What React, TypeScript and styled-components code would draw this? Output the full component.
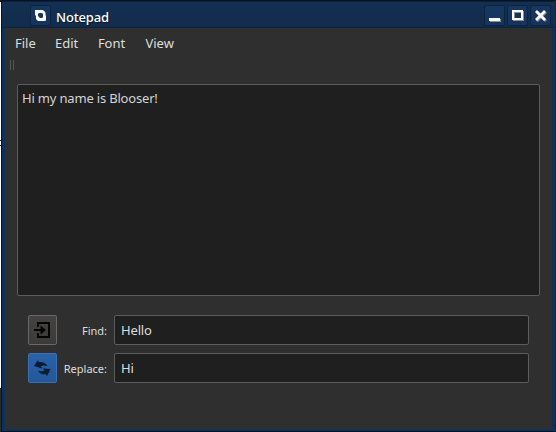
import React from "react";
import styled, { createGlobalStyle } from "styled-components";

const GlobalStyle = createGlobalStyle`
  * { box-sizing: border-box; }
  body { margin: 0; overflow: hidden; background: #101820; font-family: "Noto Sans", sans-serif; }
`;

const Desktop = styled.div`
  width: 556px;
  height: 432px;
  padding-left: 1px;
  background: linear-gradient(#0b1a2b 0 2px, #ffffff 2px 140px, #3c0a50 140px 141px, #ffffff 141px 145px, #3c0a50 145px 146px, #ffffff 146px 388px, #2a2c30 388px);
`;

const Window = styled.div`
  display: flex;
  flex-direction: column;
  width: 555px;
  height: 432px;
  padding: 0 3px 2px;
  border: 1px solid #061422;
  border-right-color: #0d2745;
  background: #0f3159;
`;

const TitleBar = styled.div`
  display: flex;
  align-items: center;
  flex: 0 0 27px;
  margin: 0 -3px;
  padding: 2px 4px 0 28px;
  background: linear-gradient(#0b2038 0 1px, #132f52 1px, #112c4c 25px, #0b213b);
`;

const TitleButton = styled.button<{ $gap?: number }>`
  width: 21px;
  height: 21px;
  flex: none;
  padding: 0;
  margin-left: ${(p) => p.$gap ?? 0}px;
  border: 1px solid #0c2440;
  border-radius: 2px;
  background: linear-gradient(#17375f, #14345f);
  svg { display: block; }
`;

const Title = styled.div`
  flex: 1;
  margin-left: 5px;
  padding-top: 2px;
  color: #fff;
  font-size: 13px;
  font-weight: 500;
  letter-spacing: -0.15px;
  line-height: 20px;
  text-shadow: 1px 1px 0 #081a2e;
`;

const Content = styled.div`
  display: flex;
  flex-direction: column;
  flex: 1;
  width: 547px;
  background: #2f2f2f;
`;

const MenuBar = styled.nav`
  display: flex;
  gap: 19.6px;
  height: 30px;
  padding-left: 10px;
  color: #dedede;
  font-size: 13px;
  line-height: 31px;
  span:nth-child(2) { margin-left: -0.4px; }
  span:nth-child(4) { margin-left: 0.6px; }
`;

const ToolHandle = styled.div`
  width: 4px;
  height: 10px;
  margin: 2px 0 0 5px;
  border: solid #555;
  border-width: 0 1px;
`;

const Editor = styled.div`
  width: 523px;
  height: 212px;
  margin: 14px 0 0 12px;
  padding: 4px 4px;
  border: 1px solid #5c5c5c;
  border-radius: 2px;
  background: #1f1f1f;
  color: #d4d4d4;
  font-size: 13px;
  letter-spacing: -0.18px;
  line-height: 19px;
`;

const SearchPanel = styled.div`
  display: grid;
  grid-template-columns: 29px 50px 415px;
  grid-template-rows: 30px 30px;
  row-gap: 8px;
  margin: 19px 0 0 23px;
`;

const ActionButton = styled.button<{ $active?: boolean }>`
  width: 29px;
  height: 30px;
  padding: 0;
  border: 1px solid ${(p) => (p.$active ? "#3a70b5" : "#686868")};
  border-radius: 2px;
  background: ${(p) => (p.$active ? "linear-gradient(#2a62a8, #24579a)" : "linear-gradient(#444341, #3b3a38)")};
  svg { display: block; }
`;

const Label = styled.label`
  color: #dedede;
  font-size: 11px;
  line-height: 31px;
  text-align: right;
  white-space: nowrap;
`;

const Field = styled.div`
  margin-left: 7px;
  width: 415px;
  padding-left: 6px;
  border: 1px solid #5c5c5c;
  border-radius: 2px;
  background: #1f1f1f;
  color: #dedede;
  font-size: 13px;
  letter-spacing: -0.15px;
  line-height: 28px;
`;

const AppIcon = () => (
  <svg width="19" height="19" viewBox="0 0 19 19">
    <path d="M5 5h8l2 2v8H8l-3-2z" fill="#9ea4a8" />
    <path d="M4 4h3l1 0h4l2 2v3l1 1v4l-2 1H7l-2-2v-3L4 9z" fill="#fff" />
    <path d="M8 7h3l1 1v3l-1 1H9l-2-2V8z" fill="#17375f" />
  </svg>
);

const MinimizeIcon = () => (
  <svg width="19" height="19" viewBox="0 0 19 19" shapeRendering="crispEdges">
    <path d="M5 13h11v3H5z" fill="#8e8e88" />
    <path d="M4 12h11v3H4z" fill="#fff" />
  </svg>
);

const MaximizeIcon = () => (
  <svg width="19" height="19" viewBox="0 0 19 19" shapeRendering="crispEdges">
    <path d="M6 6h9v8H6z" fill="none" stroke="#8e8e88" strokeWidth="2" />
    <path d="M5 5h9v8H5z" fill="none" stroke="#fff" strokeWidth="2" />
  </svg>
);

const CloseIcon = () => (
  <svg width="19" height="19" viewBox="0 0 19 19">
    <path d="M6 6l9 9M15 6l-9 9" stroke="#858580" strokeWidth="2.8" />
    <path d="M5 5l9 9M14 5l-9 9" stroke="#fff" strokeWidth="2.8" />
  </svg>
);

const EnterIcon = () => (
  <svg width="27" height="28" viewBox="0 0 27 28" fill="none" stroke="#050505">
    <path d="M9 11V7h11v14H9v-4" strokeWidth="2" />
    <path d="M5 14h9" strokeWidth="2" />
    <path d="M11.5 9.5l5.5 4.500-5.500 4.500z" fill="#050505" stroke="none" />
  </svg>
);

const SwapIcon = () => (
  <svg width="27" height="28" viewBox="0 0 27 28" fill="#0b1d35">
    <path d="M5 12l4-6 .5 2c4-.5 7.500 1 9 4-2.500-.8-4.500-.8-6.500 0l1 2.500z" />
    <path d="M21.500 15l-3.500 7-1.500-2c-3.500.8-6-.5-7.500-3.500 2.500 1 4.500 1 6.500 0l-1.500-2z" />
  </svg>
);

const searches = [
  { label: "Find:", value: "Hello", icon: <EnterIcon />, active: false },
  { label: "Replace:", value: "Hi", icon: <SwapIcon />, active: true },
];

export default function App() {
  return (
    <Desktop>
      <GlobalStyle />
      <Window>
        <TitleBar>
          <TitleButton aria-label="Window menu"><AppIcon /></TitleButton>
          <Title>Notepad</Title>
          <TitleButton aria-label="Minimize"><MinimizeIcon /></TitleButton>
          <TitleButton aria-label="Maximize" $gap={2}><MaximizeIcon /></TitleButton>
          <TitleButton aria-label="Close" $gap={2}><CloseIcon /></TitleButton>
        </TitleBar>
        <Content>
          <MenuBar>
            {["File", "Edit", "Font", "View"].map((item) => <span key={item}>{item}</span>)}
          </MenuBar>
          <ToolHandle />
          <Editor>Hi my name is Blooser!</Editor>
          <SearchPanel>
            {searches.map((s) => (
              <React.Fragment key={s.label}>
                <ActionButton $active={s.active} aria-label={s.label}>{s.icon}</ActionButton>
                <Label>{s.label}</Label>
                <Field>{s.value}</Field>
              </React.Fragment>
            ))}
          </SearchPanel>
        </Content>
      </Window>
    </Desktop>
  );
}
